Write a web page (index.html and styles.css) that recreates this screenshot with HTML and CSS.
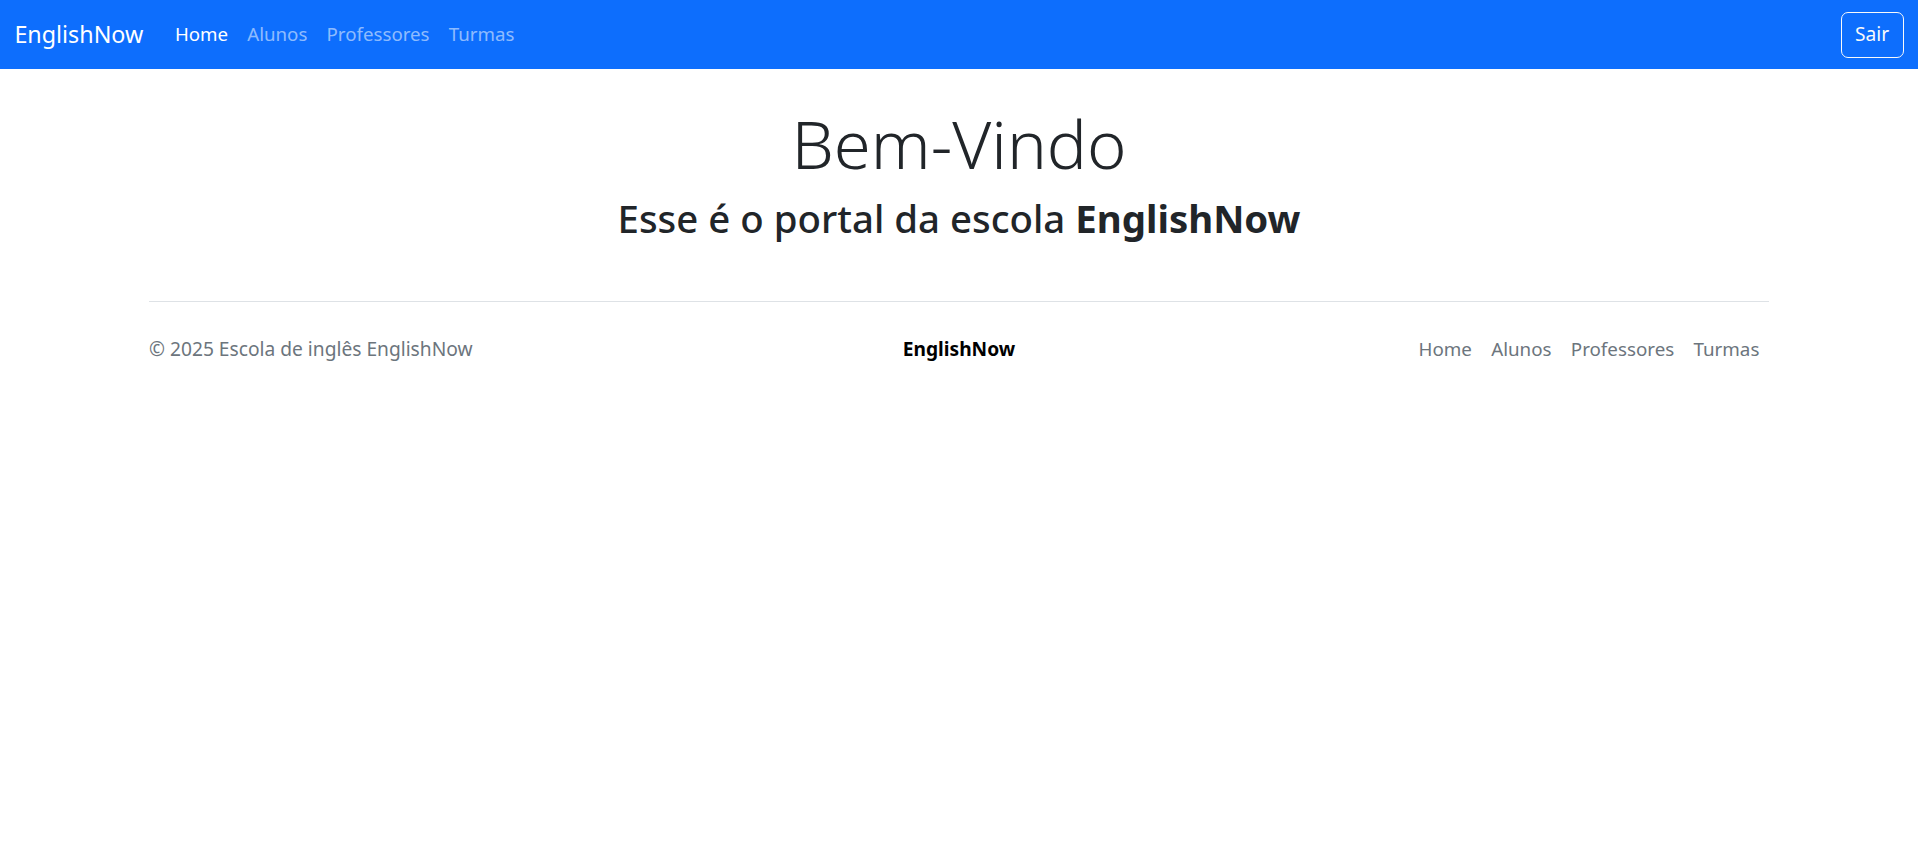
FILE: index.html
```html
<!DOCTYPE html>
<html lang="pt-br">
<head>
<meta charset="utf-8">
<title>EnglishNow</title>
<link rel="stylesheet" href="styles.css">
</head>
<body>
<nav class="navbar">
  <div class="nav-inner">
    <a class="brand" href="#">EnglishNow</a>
    <ul class="nav-links">
      <li><a class="nav-link active" href="#">Home</a></li>
      <li><a class="nav-link" href="#">Alunos</a></li>
      <li><a class="nav-link" href="#">Professores</a></li>
      <li><a class="nav-link" href="#">Turmas</a></li>
    </ul>
    <button class="btn-sair" type="button">Sair</button>
  </div>
</nav>
<main class="main">
  <h1 class="display">Bem-Vindo</h1>
  <h2 class="subtitle">Esse é o portal da escola <strong>EnglishNow</strong></h2>
</main>
<footer class="footer">
  <p class="copy">© 2025 Escola de inglês EnglishNow</p>
  <div class="footer-brand">EnglishNow</div>
  <ul class="footer-links">
    <li><a href="#">Home</a></li>
    <li><a href="#">Alunos</a></li>
    <li><a href="#">Professores</a></li>
    <li><a href="#">Turmas</a></li>
  </ul>
</footer>
</body>
</html>
```
FILE: styles.css
```css
* { box-sizing: border-box; }
html, body { margin: 0; padding: 0; }
body {
  font-family: "Noto Sans", "Open Sans", sans-serif;
  font-size: 19.2px;
  line-height: 1.5;
  color: #212529;
  background: #fff;
}
a { text-decoration: none; }
ul { list-style: none; margin: 0; padding: 0; }

.navbar {
  background: #0d6efd;
  height: 69px;
}
.nav-inner {
  height: 100%;
  display: flex;
  align-items: center;
  padding: 0 14.4px;
}
.brand {
  color: #fff;
  font-size: 23.3px;
  margin-right: 22px;
  line-height: 1.5;
}
.nav-links {
  display: flex;
  flex: 1;
}
.nav-link {
  display: block;
  padding: 9.6px;
  font-size: 18.7px;
  color: rgba(255,255,255,0.55);
}
.nav-link.active { color: #fff; }
.btn-sair {
  font-family: inherit;
  font-size: 19.2px;
  line-height: 1.5;
  color: #f8f9fa;
  background: transparent;
  border: 1px solid #f8f9fa;
  border-radius: 7px;
  padding: 6.5px 13.4px;
  height: 46px;
}

.main {
  text-align: center;
  padding-top: 34px;
}
.display {
  font-size: 67px;
  font-weight: 300;
  line-height: 1.2;
  margin: 0 0 12px;
}
.subtitle {
  font-size: 38.4px;
  font-weight: 500;
  line-height: 1.2;
  margin: 0;
}
.subtitle strong { font-weight: 700; }

.footer {
  width: 1620px;
  margin: 60px auto 0;
  border-top: 1px solid #dee2e6;
  padding: 23px 0 19px;
  display: grid;
  grid-template-columns: 1fr 1fr 1fr;
  align-items: center;
}
.copy {
  margin: 0;
  color: #6c757d;
}
.footer-brand {
  text-align: center;
  font-weight: 700;
  color: #000;
}
.footer-links {
  display: flex;
  justify-content: flex-end;
}
.footer-links a {
  display: block;
  padding: 9.6px;
  font-size: 18.8px;
  color: #6c757d;
}
```
